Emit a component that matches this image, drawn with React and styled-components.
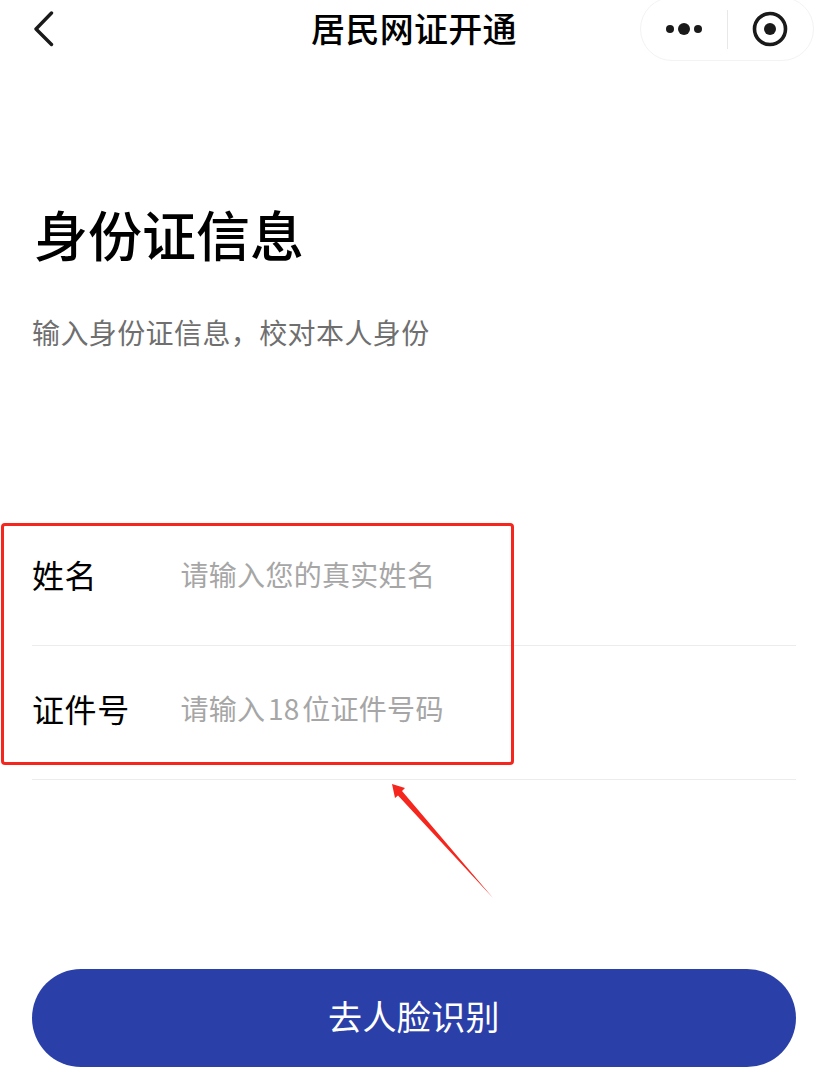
import React from "react";
import styled, { createGlobalStyle } from "styled-components";

const GlobalStyle = createGlobalStyle`
  html, body {
    margin: 0;
    padding: 0;
    background: #fff;
  }
  body {
    font-family: "Noto Sans CJK SC", "Liberation Sans", sans-serif;
  }
`;

const Page = styled.div`
  position: relative;
  width: 828px;
  height: 1072px;
  overflow: hidden;
  background: #fff;
`;

const NavBar = styled.div`
  position: relative;
  display: flex;
  align-items: center;
  justify-content: center;
  height: 60px;
`;

const BackButton = styled.svg`
  position: absolute;
  left: 33px;
  top: 11px;
`;

const NavTitle = styled.div`
  padding-bottom: 4px;
  font-size: 34px;
  font-weight: 500;
  letter-spacing: 0.3px;
  color: #000;
  line-height: 56px;
`;

const Capsule = styled.div`
  position: absolute;
  left: 640px;
  top: -3px;
  width: 174px;
  height: 64px;
  box-sizing: border-box;
  border: 1px solid #f3f3f3;
  border-radius: 32px;
  display: flex;
  align-items: center;
`;

const CapsuleSide = styled.div`
  flex: 1;
  display: flex;
  align-items: center;
  justify-content: center;
`;

const CapsuleDivider = styled.div`
  width: 1px;
  height: 39px;
  background: #e8e8e8;
`;

const Content = styled.div`
  padding: 0 32px;
`;

const Title = styled.h1`
  margin: 139px 0 0;
  padding-left: 2px;
  font-size: 54px;
  line-height: 70px;
  font-weight: 500;
  color: #000;
`;

const Subtitle = styled.p`
  margin: 43px 0 0;
  font-size: 28px;
  line-height: 40px;
  letter-spacing: 0.4px;
  color: #6f6f6f;
`;

const Form = styled.div`
  margin-top: 160px;
`;

const Row = styled.div`
  display: flex;
  align-items: center;
  height: 134px;
  padding-bottom: 9px;
  box-sizing: border-box;
  border-bottom: 1px solid #ececec;
`;

const Label = styled.div`
  width: 148.5px;
  font-size: 32px;
  letter-spacing: 0.6px;
  color: #000;
  flex-shrink: 0;
`;

const Placeholder = styled.div`
  font-size: 28px;
  letter-spacing: 0.3px;
  word-spacing: -4px;
  color: #a6a6a6;
`;

const SubmitButton = styled.button`
  display: block;
  width: 100%;
  height: 98px;
  margin-top: 189px;
  padding: 0 0 6px;
  border: 0;
  border-radius: 49px;
  background: #2a40a8;
  color: #fff;
  font-family: inherit;
  font-size: 34px;
  letter-spacing: 0.4px;
`;

const Highlight = styled.div`
  position: absolute;
  left: 1px;
  top: 523px;
  width: 513px;
  height: 242px;
  box-sizing: border-box;
  border: 3px solid #f5261d;
  border-radius: 4px;
`;

const Arrow = styled.svg`
  position: absolute;
  left: 385px;
  top: 778px;
`;

export default function App() {
  return (
    <Page>
      <GlobalStyle />
      <NavBar>
        <BackButton width="24" height="38" viewBox="0 0 24 38" fill="none">
          <path d="M18.5 2 L3 18 L18.5 33.5" stroke="#1a1a1a" strokeWidth="3.4" strokeLinecap="round" strokeLinejoin="round" />
        </BackButton>
        <NavTitle>居民网证开通</NavTitle>
        <Capsule>
          <CapsuleSide>
            <svg width="38" height="14" viewBox="0 0 38 14">
              <circle cx="5" cy="7" r="4" fill="#1a1a1a" />
              <circle cx="19" cy="7" r="6" fill="#1a1a1a" />
              <circle cx="33" cy="7" r="4" fill="#1a1a1a" />
            </svg>
          </CapsuleSide>
          <CapsuleDivider />
          <CapsuleSide>
            <svg width="36" height="36" viewBox="0 0 36 36">
              <circle cx="18" cy="18" r="15.5" fill="none" stroke="#1a1a1a" strokeWidth="3.6" />
              <circle cx="18" cy="18" r="6" fill="#1a1a1a" />
            </svg>
          </CapsuleSide>
        </Capsule>
      </NavBar>
      <Content>
        <Title>身份证信息</Title>
        <Subtitle>{"输入身份证信息\uFF0C校对本人身份"}</Subtitle>
        <Form>
          <Row>
            <Label>姓名</Label>
            <Placeholder>请输入您的真实姓名</Placeholder>
          </Row>
          <Row>
            <Label>证件号</Label>
            <Placeholder>请输入 18 位证件号码</Placeholder>
          </Row>
        </Form>
        <SubmitButton>去人脸识别</SubmitButton>
      </Content>
      <Highlight />
      <Arrow width="110" height="122" viewBox="0 0 110 122">
        <path d="M7 6 L20 10 L17 13 L108 120 L13 17.5 L10 20 Z" fill="#f5261d" />
      </Arrow>
    </Page>
  );
}
